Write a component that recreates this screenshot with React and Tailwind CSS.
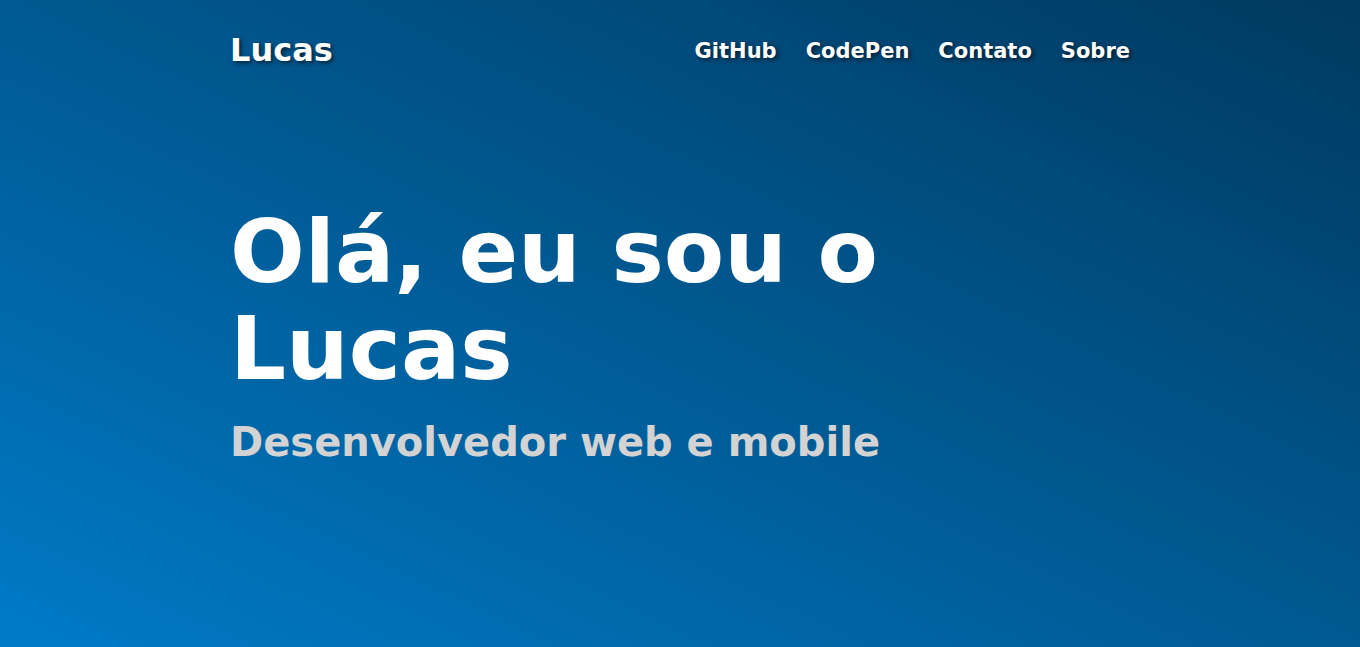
import React from "react";

function App() {
  const links = ["GitHub", "CodePen", "Contato", "Sobre"];

  return (
    <div
      className="min-h-screen h-[647px] bg-gradient-to-tr from-[#007ac7] to-[#003a60] text-white"
      style={{ fontFamily: '"DejaVu Sans", Verdana, sans-serif' }}
    >
      <div className="max-w-[900px] mx-auto">
        <header className="flex items-center justify-between pt-[32px]">
          <h2 className="text-[32px] font-bold leading-[1.164] [text-shadow:2px_2px_4px_rgba(0,0,0,0.6)]">
            Lucas
          </h2>
          <nav className="flex gap-[29px] pt-[2px]">
            {links.map((l) => (
              <a
                key={l}
                href="#"
                className="text-[21px] font-bold [text-shadow:2px_2px_4px_rgba(0,0,0,0.6)]"
              >
                {l}
              </a>
            ))}
          </nav>
        </header>

        <main className="mt-[135px]">
          <h1 className="text-[88px] font-bold leading-[1.1] max-w-[700px]">
            Olá, eu sou o Lucas
          </h1>
          <p className="mt-[20px] text-[40px] font-bold leading-[1.2] text-[#d3d3d3]">
            Desenvolvedor web e mobile
          </p>
        </main>
      </div>
    </div>
  );
}

export default App;
